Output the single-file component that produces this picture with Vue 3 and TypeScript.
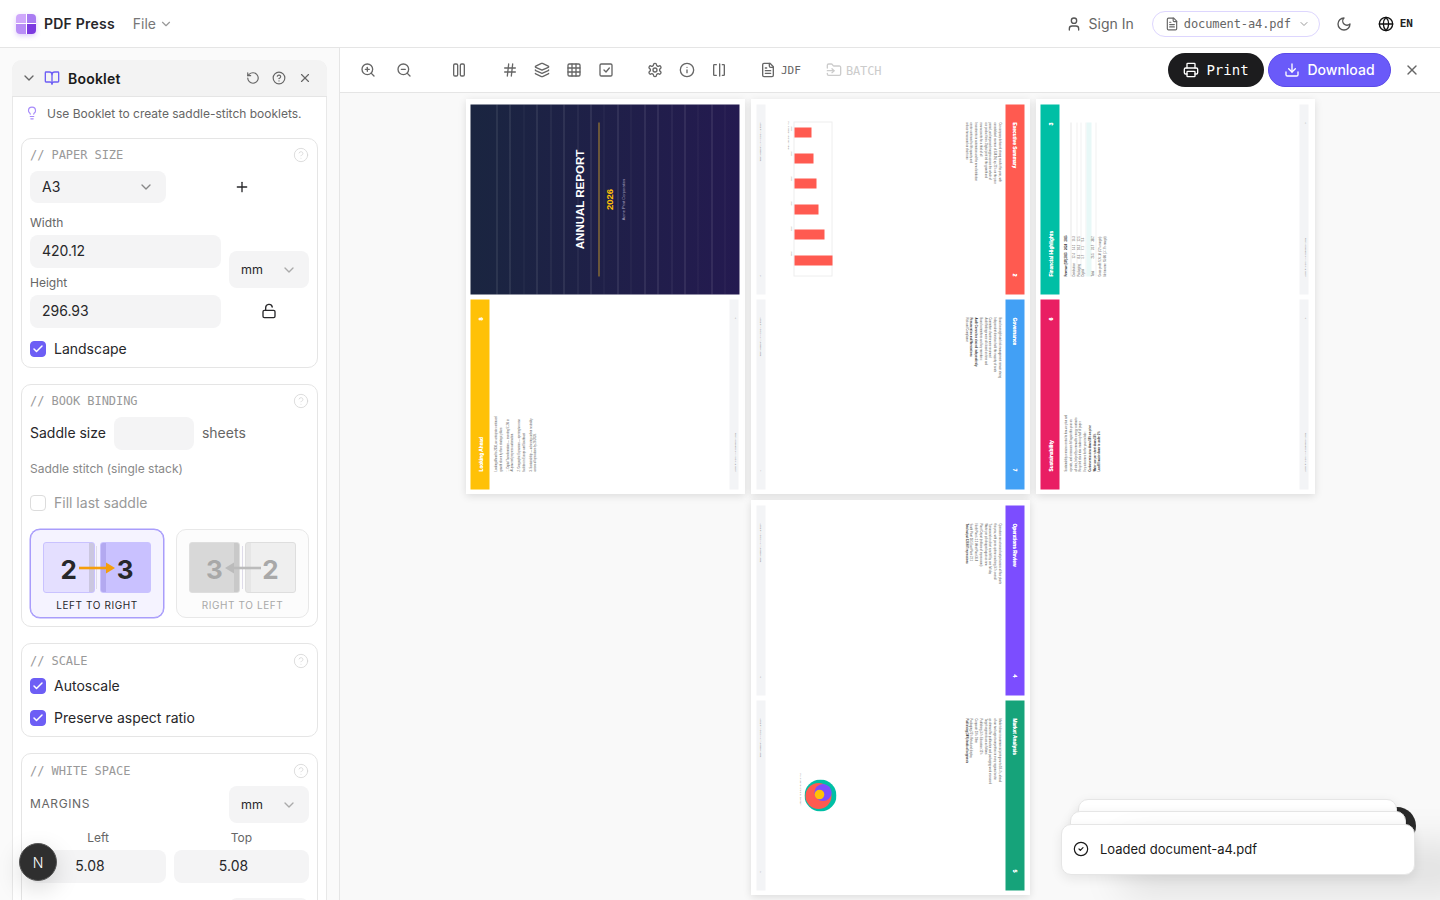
<script setup lang="ts">
import { h } from 'vue'

const ICONS: Record<string, string> = {
	chevron: '<path d="m6 9 6 6 6-6"/>',
	book: '<path d="M12 7v14"/><path d="M3 18a1 1 0 0 1-1-1V4a1 1 0 0 1 1-1h5a4 4 0 0 1 4 4 4 4 0 0 1 4-4h5a1 1 0 0 1 1 1v13a1 1 0 0 1-1 1h-6a3 3 0 0 0-3 3 3 3 0 0 0-3-3z"/>',
	undo: '<path d="M3 12a9 9 0 1 0 9-9 9.75 9.75 0 0 0-6.74 2.74L3 8"/><path d="M3 3v5h5"/>',
	help: '<circle cx="12" cy="12" r="10"/><path d="M9.09 9a3 3 0 0 1 5.83 1c0 2-3 3-3 3"/><path d="M12 17h.01"/>',
	close: '<path d="M18 6 6 18"/><path d="m6 6 12 12"/>',
	bulb: '<path d="M15 14c.2-1 .7-1.7 1.5-2.5 1-.9 1.5-2.2 1.5-3.5A6 6 0 0 0 6 8c0 1 .2 2.2 1.5 3.5.7.7 1.3 1.5 1.5 2.5"/><path d="M9 18h6"/><path d="M10 22h4"/>',
	plus: '<path d="M5 12h14"/><path d="M12 5v14"/>',
	unlock: '<rect x="3" y="11" width="18" height="11" rx="2"/><path d="M7 11V7a5 5 0 0 1 9.9-1"/>',
	user: '<path d="M19 21v-2a4 4 0 0 0-4-4H9a4 4 0 0 0-4 4v2"/><circle cx="12" cy="7" r="4"/>',
	file: '<path d="M15 2H6a2 2 0 0 0-2 2v16a2 2 0 0 0 2 2h12a2 2 0 0 0 2-2V7Z"/><path d="M14 2v4a2 2 0 0 0 2 2h4"/><path d="M10 9H8"/><path d="M16 13H8"/><path d="M16 17H8"/>',
	moon: '<path d="M12 3a6 6 0 0 0 9 9 9 9 0 1 1-9-9Z"/>',
	globe: '<circle cx="12" cy="12" r="10"/><path d="M12 2a14.5 14.5 0 0 0 0 20 14.5 14.5 0 0 0 0-20"/><path d="M2 12h20"/>',
	printer: '<path d="M6 18H4a2 2 0 0 1-2-2v-5a2 2 0 0 1 2-2h16a2 2 0 0 1 2 2v5a2 2 0 0 1-2 2h-2"/><path d="M6 9V3a1 1 0 0 1 1-1h10a1 1 0 0 1 1 1v6"/><rect x="6" y="14" width="12" height="8" rx="1"/>',
	download: '<path d="M12 15V3"/><path d="M21 15v4a2 2 0 0 1-2 2H5a2 2 0 0 1-2-2v-4"/><path d="m7 10 5 5 5-5"/>',
	zoomIn: '<circle cx="11" cy="11" r="8"/><path d="m21 21-4.35-4.35"/><path d="M11 8v6"/><path d="M8 11h6"/>',
	zoomOut: '<circle cx="11" cy="11" r="8"/><path d="m21 21-4.35-4.35"/><path d="M8 11h6"/>',
	columns: '<rect x="4" y="3" width="6" height="18" rx="2"/><rect x="14" y="3" width="6" height="18" rx="2"/>',
	hash: '<path d="M4 9h16"/><path d="M4 15h16"/><path d="M10 3 8 21"/><path d="M16 3l-2 18"/>',
	layers: '<path d="M12.83 2.18a2 2 0 0 0-1.66 0L2.6 6.08a1 1 0 0 0 0 1.83l8.58 3.91a2 2 0 0 0 1.66 0l8.58-3.9a1 1 0 0 0 0-1.83z"/><path d="M2 12a1 1 0 0 0 .58.91l8.6 3.91a2 2 0 0 0 1.65 0l8.58-3.9A1 1 0 0 0 22 12"/><path d="M2 17a1 1 0 0 0 .58.91l8.6 3.91a2 2 0 0 0 1.65 0l8.58-3.9A1 1 0 0 0 22 17"/>',
	grid: '<rect x="3" y="3" width="18" height="18" rx="2"/><path d="M3 9h18"/><path d="M3 15h18"/><path d="M9 3v18"/><path d="M15 3v18"/>',
	check: '<rect x="3" y="3" width="18" height="18" rx="2"/><path d="m9 12 3 3 5-6"/>',
	settings: '<path d="M12.22 2h-.44a2 2 0 0 0-2 2v.18a2 2 0 0 1-1 1.73l-.43.25a2 2 0 0 1-2 0l-.15-.08a2 2 0 0 0-2.73.73l-.22.38a2 2 0 0 0 .73 2.73l.15.1a2 2 0 0 1 1 1.72v.51a2 2 0 0 1-1 1.74l-.15.09a2 2 0 0 0-.73 2.73l.22.38a2 2 0 0 0 2.73.73l.15-.08a2 2 0 0 1 2 0l.43.25a2 2 0 0 1 1 1.73V20a2 2 0 0 0 2 2h.44a2 2 0 0 0 2-2v-.18a2 2 0 0 1 1-1.73l.43-.25a2 2 0 0 1 2 0l.15.08a2 2 0 0 0 2.73-.73l.22-.39a2 2 0 0 0-.73-2.73l-.15-.08a2 2 0 0 1-1-1.74v-.5a2 2 0 0 1 1-1.74l.15-.09a2 2 0 0 0 .73-2.73l-.22-.38a2 2 0 0 0-2.73-.73l-.15.08a2 2 0 0 1-2 0l-.43-.25a2 2 0 0 1-1-1.73V4a2 2 0 0 0-2-2z"/><circle cx="12" cy="12" r="3"/>',
	info: '<circle cx="12" cy="12" r="10"/><path d="M12 16v-4"/><path d="M12 8h.01"/>',
	brackets: '<path d="M8 4H5a1 1 0 0 0-1 1v14a1 1 0 0 0 1 1h3"/><path d="M17 4h2a1 1 0 0 1 1 1v14a1 1 0 0 1-1 1h-2"/><path d="M13 3v18"/>',
	folder: '<path d="M2 9V5a2 2 0 0 1 2-2h3.9a2 2 0 0 1 1.69.9l.81 1.2a2 2 0 0 0 1.67.9H20a2 2 0 0 1 2 2v10a2 2 0 0 1-2 2H4a2 2 0 0 1-2-2v-1"/><path d="M2 13h10"/><path d="m9 16 3-3-3-3"/>',
	circleCheck: '<circle cx="12" cy="12" r="10"/><path d="m9 12 2 2 4-4"/>',
	tick: '<path d="M20 6 9 17l-5-5"/>',
}

const Icon = (props: { name: string; size?: number | string; sw?: number | string }) =>
	h('svg', {
		width: props.size ?? 16,
		height: props.size ?? 16,
		viewBox: '0 0 24 24',
		fill: 'none',
		stroke: 'currentColor',
		'stroke-width': props.sw ?? 2,
		'stroke-linecap': 'round',
		'stroke-linejoin': 'round',
		innerHTML: ICONS[props.name],
	})
Icon.props = ['name', 'size', 'sw']

interface TextLine {
	t: string
	b?: boolean
	gap?: boolean
}

interface Page {
	kind: 'cover' | 'text' | 'bars' | 'table' | 'donut'
	title?: string
	num?: number
	color?: string
	flip: boolean
	lines?: TextLine[]
}

const exec: TextLine[] = [
	{ t: 'Our company delivered strong results this year, with' },
	{ t: 'consolidated revenue of $38.2M, up 21% on the prior' },
	{ t: 'period, and improved margins across the whole of' },
	{ t: 'our product lines. Digital print led the growth and' },
	{ t: 'now accounts for a third of all' },
	{ t: 'Investments in automation and the new distribution' },
	{ t: 'centre continued to lift capacity and' },
	{ t: 'reduce turnaround on short runs' },
]
const market: TextLine[] = [
	{ t: 'Market share in commercial print grew to 18.4%, ahead' },
	{ t: 'of our two largest competitors in every regional sector' },
	{ t: 'as demand for publication and packaging work recovered' },
	{ t: 'Target segments are as follows:' },
	{ t: 'Publishing    34%  Education  12%' },
	{ t: 'Corporate     29%  Other' },
	{ t: 'Packaging  25%  Retail and display' },
	{ t: 'Publishing (34%) leads all segments', b: true },
]
const ops: TextLine[] = [
	{ t: 'Operations ran at record output across all four plants' },
	{ t: 'this year, with press uptime reaching 94% overall' },
	{ t: 'Turnaround on short runs fell by one full day' },
	{ t: 'Waste per job dropped again as new' },
	{ t: 'Plant Output (millions of impressions):' },
	{ t: 'North Plant 41.2   West Plant 36.8' },
	{ t: 'South Plant 28.5   East Plant 22.1' },
	{ t: 'Total output 128.6M impressions', b: true },
]
const gov: TextLine[] = [
	{ t: 'Board oversight and risk management remain strong' },
	{ t: 'Independent directors hold the majority of seats' },
	{ t: 'Committee charters were reviewed' },
	{ t: 'Audit findings were all closed on time and' },
	{ t: 'Board committees and key members:' },
	{ t: 'Audit Committee chaired independently', b: true },
	{ t: 'Remuneration and Nominations', b: true },
	{ t: 'Risk and Compliance' },
]
const ahead: TextLine[] = [
	{ t: 'Looking Ahead to 2030, we anticipate continued' },
	{ t: 'growth driven by three strategic pillars:' },
	{ t: '1. Digital Transformation — investing $12M in', gap: true },
	{ t: 'AI-powered prepress automation.' },
	{ t: '2. Geographic Expansion — opening two new', gap: true },
	{ t: 'facilities in Europe and Southeast' },
	{ t: '3. Sustainability — achieving carbon neutrality', gap: true },
	{ t: 'across all operations by 28 2028.' },
]
const sustain: TextLine[] = [
	{ t: 'Sustainability remains central to how we plan and' },
	{ t: 'operate, and emissions fell again this year on' },
	{ t: 'all sites, helped by renewable energy contracts' },
	{ t: 'Recycled stock now makes up half of paper' },
	{ t: 'Key outcomes for the year include:' },
	{ t: 'Carbon emissions down 18% on prior', b: true },
	{ t: 'Water use per sheet down 11%', b: true },
	{ t: 'Landfill waste down to under 2%', b: true },
]

const sheets: Page[][] = [
	[
		{ kind: 'cover', flip: true },
		{ kind: 'text', title: 'Looking Ahead', num: 8, color: '#ffc107', flip: true, lines: ahead },
	],
	[
		{ kind: 'bars', title: 'Executive Summary', num: 2, color: '#ff5a50', flip: false, lines: exec },
		{ kind: 'text', title: 'Governance', num: 7, color: '#42a0f5', flip: false, lines: gov },
	],
	[
		{ kind: 'table', title: 'Financial Highlights', num: 3, color: '#00bfa5', flip: true },
		{ kind: 'text', title: 'Sustainability', num: 6, color: '#e91e63', flip: true, lines: sustain },
	],
	[
		{ kind: 'text', title: 'Operations Review', num: 4, color: '#7c4dff', flip: false, lines: ops },
		{ kind: 'donut', title: 'Market Analysis', num: 5, color: '#16a37a', flip: false, lines: market },
	],
]

const coverRules = [0, 1, 1, 0.35, 1, 0.6, 1, 0.6, 1, 0.35, 1, 0.35, 1, 1, 0.6, 1, 0.35, 1, 0.35, 0]
const bars = [
	{ y: '2021', h: 17 },
	{ y: '2022', h: 19 },
	{ y: '2023', h: 22 },
	{ y: '2024', h: 24 },
	{ y: '2025', h: 30 },
	{ y: '2026', h: 38 },
]
const tableRows = [
	{ c: ['Distribution', '12.4', '14.1', '16.3'] },
	{ c: ['Packaging', '8.4', '10.5', '12.5'] },
	{ c: ['Digital', '5.7', '7.1', '9.4'] },
]
const directions = [
	{ label: 'LEFT TO RIGHT', a: '2', b: '3', on: true },
	{ label: 'RIGHT TO LEFT', a: '3', b: '2', on: false },
]
</script>

<template>
	<div class="app">
		<header class="topbar">
			<div class="logo"><i></i><i></i><i></i><i></i></div>
			<span class="brand">PDF Press</span>
			<span class="file-menu">File <Icon name="chevron" size="14" /></span>
			<div class="top-right">
				<Icon class="user-ic" name="user" size="16" />
				<span class="sign">Sign In</span>
				<div class="doc-pill">
					<Icon name="file" size="14" />
					<span>document-a4.pdf</span>
					<Icon class="pill-chev" name="chevron" size="12" />
				</div>
				<Icon class="moon" name="moon" size="16" />
				<Icon class="globe" name="globe" size="16" />
				<span class="lang">EN</span>
			</div>
		</header>

		<div class="work">
			<aside class="side">
				<section class="panel">
					<div class="panel-head">
						<Icon class="ph-chev" name="chevron" size="16" />
						<Icon class="ph-book" name="book" size="16" />
						<span class="ph-title">Booklet</span>
						<Icon class="ph-ic" name="undo" size="14" />
						<Icon class="ph-ic" name="help" size="14" />
						<Icon class="ph-ic" name="close" size="14" />
					</div>
					<div class="tip">
						<Icon class="tip-ic" name="bulb" size="14" />
						<span>Use Booklet to create saddle-stitch booklets.</span>
					</div>

					<div class="card">
						<div class="card-title"><span>// PAPER SIZE</span><Icon class="q" name="help" size="16" sw="1.2" /></div>
						<div class="pair">
							<div class="select">A3<Icon name="chevron" size="16" /></div>
							<div class="center"><Icon name="plus" size="16" /></div>
						</div>
						<div class="size-grid">
							<div>
								<div class="lab">Width</div>
								<div class="input">420.12</div>
								<div class="lab second">Height</div>
								<div class="input">296.93</div>
							</div>
							<div class="size-right">
								<div class="select unit">mm<Icon name="chevron" size="16" /></div>
								<div class="center lock"><Icon name="unlock" size="16" /></div>
							</div>
						</div>
						<label class="check first-check"><span class="box on"><Icon name="tick" size="12" sw="3" /></span>Landscape</label>
					</div>

					<div class="card binding">
						<div class="card-title"><span>// BOOK BINDING</span><Icon class="q" name="help" size="16" sw="1.2" /></div>
						<div class="saddle">
							<span>Saddle size</span>
							<div class="input short"></div>
							<span class="muted">sheets</span>
						</div>
						<div class="hint">Saddle stitch (single stack)</div>
						<label class="check disabled"><span class="box"></span>Fill last saddle</label>
						<div class="dirs">
							<div v-for="d in directions" :key="d.label" class="dir" :class="{ on: d.on }">
								<div class="spread">
									<div class="leaf a"><span>{{ d.a }}</span></div>
									<div class="leaf b"><span>{{ d.b }}</span></div>
									<svg class="arrow" width="36" height="12" viewBox="0 0 36 12">
										<template v-if="d.on">
											<path d="M0 6h29" stroke="currentColor" stroke-width="2.6" />
											<path d="M27 0.5l9 5.5-9 5.5z" fill="currentColor" />
										</template>
										<template v-else>
											<path d="M7 6h29" stroke="currentColor" stroke-width="2.6" />
											<path d="M9 0.5 0 6l9 5.5z" fill="currentColor" />
										</template>
									</svg>
								</div>
								<div class="dir-label">{{ d.label }}</div>
							</div>
						</div>
					</div>

					<div class="card late">
						<div class="card-title"><span>// SCALE</span><Icon class="q" name="help" size="16" sw="1.2" /></div>
						<label class="check scale-a"><span class="box on"><Icon name="tick" size="12" sw="3" /></span>Autoscale</label>
						<label class="check scale-b"><span class="box on"><Icon name="tick" size="12" sw="3" /></span>Preserve aspect ratio</label>
					</div>

					<div class="card late">
						<div class="card-title"><span>// WHITE SPACE</span><Icon class="q" name="help" size="16" sw="1.2" /></div>
						<div class="margins-row">
							<span class="margins">MARGINS</span>
							<div class="select unit">mm<Icon name="chevron" size="16" /></div>
						</div>
						<div class="margin-grid">
							<div>
								<div class="lab mid">Left</div>
								<div class="input num">5.08</div>
							</div>
							<div>
								<div class="lab mid">Top</div>
								<div class="input num">5.08</div>
							</div>
						</div>
						<div class="margins-row next">
							<span></span>
							<div class="select unit"></div>
						</div>
					</div>
				</section>
			</aside>

			<main class="main">
				<div class="tools">
					<div class="tool-group"><button class="tool"><Icon name="zoomIn" /></button><button class="tool gap4"><Icon name="zoomOut" /></button></div>
					<div class="tool-group g2"><button class="tool"><Icon name="columns" /></button></div>
					<div class="tool-group g3">
						<button class="tool"><Icon name="hash" /></button>
						<button class="tool"><Icon name="layers" /></button>
						<button class="tool"><Icon name="grid" /></button>
						<button class="tool"><Icon name="check" /></button>
					</div>
					<div class="tool-group g4">
						<button class="tool"><Icon name="settings" /></button>
						<button class="tool"><Icon name="info" /></button>
						<button class="tool"><Icon name="brackets" /></button>
					</div>
					<button class="text-tool jdf"><Icon name="file" /><span>JDF</span></button>
					<button class="text-tool batch"><Icon name="folder" /><span>BATCH</span></button>
					<button class="print"><Icon name="printer" />Print</button>
					<button class="download"><Icon name="download" /><span>Download</span></button>
					<Icon class="tools-x" name="close" />
				</div>

				<div class="canvas">
					<div v-for="(sheet, si) in sheets" :key="si" class="sheet">
						<div v-for="(p, pi) in sheet" :key="pi" class="slot">
							<article class="page" :class="[p.flip ? 'ccw' : 'cw', { cover: p.kind === 'cover' }]">
								<template v-if="p.kind === 'cover'">
									<div class="rules">
										<i v-for="(o, i) in coverRules" :key="i" :style="{ opacity: o }"></i>
									</div>
									<div class="cover-title">ANNUAL REPORT</div>
									<div class="cover-line"></div>
									<div class="cover-year">2026</div>
									<div class="cover-co">Acme Print Corporation</div>
								</template>
								<template v-else>
									<div class="strip" :style="{ background: p.color }">
										<span>{{ p.title }}</span><span class="strip-num">{{ p.num }}</span>
									</div>
									<div class="body">
										<template v-if="p.kind === 'table'">
											<div class="tbl-row tbl-head"><b>Revenue ($M)</b><b>2023</b><b>2024</b><b>2025</b></div>
											<div v-for="r in tableRows" :key="r.c[0]" class="tbl-row">
												<span v-for="c in r.c" :key="c">{{ c }}</span>
											</div>
											<div class="tbl-hi"></div>
											<div class="tbl-row tbl-total"><span>Total</span><span>26.5</span><span>31.7</span><span>38.2</span></div>
											<div class="tbl-note first">Gross profit: $16.1M (42% margin)</div>
											<div class="tbl-note">Net income: $5.6M (14.7% margin)</div>
										</template>
										<div v-else class="copy">
											<div v-for="l in p.lines" :key="l.t" :class="{ bold: l.b, para: l.gap }">{{ l.t }}</div>
										</div>
										<div v-if="p.kind === 'bars'" class="fig">
											<div class="fig-box">
												<div v-for="b in bars" :key="b.y" class="bar-col">
													<i :style="{ height: b.h + 'px' }"></i>
												</div>
											</div>
											<div class="fig-years"><span v-for="b in bars" :key="b.y">{{ b.y }}</span></div>
											<div class="fig-cap">Fig. 1: Revenue Growth ($M)</div>
										</div>
										<div v-if="p.kind === 'donut'" class="donut-fig">
											<svg width="32" height="32" viewBox="0 0 32 32">
												<circle cx="16" cy="16" r="16" fill="#00bfa5" />
												<circle cx="16.5" cy="18" r="13" fill="#ff5a50" />
												<circle cx="13" cy="13.5" r="8.6" fill="#7c4dff" />
												<circle cx="15" cy="17" r="4.8" fill="#ffc107" />
											</svg>
											<div class="fig-cap">Fig. 2: Market Share by Segment</div>
										</div>
									</div>
									<div class="foot"><span>Acme Print Corp — Annual Report 2026</span><span>{{ p.num }}</span></div>
								</template>
							</article>
						</div>
					</div>
				</div>
			</main>
		</div>

		<div class="dev-n"><span>N</span></div>
		<div class="dev-behind"></div>
		<div class="toast back2"></div>
		<div class="toast back1"></div>
		<div class="toast">
			<Icon name="circleCheck" size="16" sw="1.8" />
			<span>Loaded document-a4.pdf</span>
		</div>
	</div>
</template>

<style scoped>
.app {
	position: relative;
	width: 1440px;
	height: 900px;
	overflow: hidden;
	background: #fff;
	color: #27272a;
	font-family: Inter, "Noto Sans", sans-serif;
}

/* top bar */
.topbar {
	display: flex;
	align-items: center;
	box-sizing: border-box;
	height: 48px;
	padding: 0 27px 0 16px;
	border-bottom: 1px solid #e5e5e5;
}
.logo {
	display: grid;
	grid-template-columns: 1fr 1fr;
	gap: 1px;
	width: 20px;
	height: 20px;
	border-radius: 4px;
	overflow: hidden;
	box-shadow: 0 2px 5px rgba(124, 58, 237, 0.25);
}
.logo i:nth-child(1) { background: #cfa8fb; }
.logo i:nth-child(2) { background: #a97cf2; }
.logo i:nth-child(3) { background: #b88df6; }
.logo i:nth-child(4) { background: #7c3ae0; }
.brand {
	margin-left: 8px;
	font-size: 14px;
	font-weight: 600;
	letter-spacing: 0.22px;
}
.file-menu {
	display: flex;
	align-items: center;
	gap: 3px;
	margin-left: 18px;
	font-size: 14px;
	color: #777;
}
.file-menu svg { color: #999; }
.top-right {
	display: flex;
	align-items: center;
	margin-left: auto;
	color: #555;
}
.sign {
	margin-left: 7px;
	font-size: 14px;
	color: #666;
}
.doc-pill {
	display: flex;
	align-items: center;
	box-sizing: border-box;
	width: 168px;
	height: 26px;
	margin-left: 18px;
	padding: 0 12px;
	border: 1px solid #ddd6fe;
	border-radius: 13px;
	font-family: "DejaVu Sans Mono", monospace;
	font-size: 12px;
	color: #666;
	white-space: nowrap;
}
.doc-pill svg { flex: none; }
.doc-pill span { margin-left: 5px; letter-spacing: -0.09px; }
.pill-chev { margin-left: 7px; color: #999; }
.moon { margin-left: 16px; }
.globe { margin-left: 26px; color: #111; }
.lang {
	margin-left: 6px;
	font-family: "DejaVu Sans Mono", monospace;
	font-size: 11px;
	font-weight: 700;
	color: #222;
}

.work {
	display: flex;
	height: 852px;
}

/* side panel */
.side {
	box-sizing: border-box;
	flex: none;
	width: 340px;
	padding: 12px;
	overflow: hidden;
	border-right: 1px solid #e5e5e5;
	background: #fafafa;
}
.panel {
	width: 315px;
	box-sizing: border-box;
	border-radius: 10px 10px 0 0;
	border: 1px solid #e8e8e8;
	border-top: 0;
	background: #fff;
}
.panel-head {
	display: flex;
	align-items: center;
	height: 37px;
	margin: 0 -1px;
	padding: 0 15px 0 9px;
	box-sizing: border-box;
	border-radius: 10px 10px 0 0;
	border-bottom: 1px solid #e5e5e5;
	background: #f3f3f3;
}
.ph-chev { color: #666; }
.ph-book { margin-left: 7px; color: #6d5ef5; }
.ph-title {
	margin-left: 8px;
	margin-right: auto;
	font-size: 14px;
	font-weight: 600;
	letter-spacing: 0.2px;
	color: #1a1a1a;
}
.ph-ic { margin-left: 12px; color: #666; }
.tip {
	display: flex;
	align-items: center;
	height: 32px;
	padding: 0 12px 9px 12px;
	font-size: 12px;
	color: #666;
}
.tip-ic { margin-right: 8px; color: #a78bfa; }
.card {
	margin: 0 8px 16px;
	padding: 8px 8px 10px;
	border: 1px solid #e5e5e5;
	border-radius: 10px;
}
.card.binding { padding-bottom: 8px; }
.card.late { padding-top: 9px; }
.card-title {
	display: flex;
	align-items: center;
	justify-content: space-between;
	height: 16px;
	font-family: "DejaVu Sans Mono", monospace;
	font-size: 12px;
	color: #999;
	letter-spacing: -0.06px;
}
.q { color: #d4d4d4; }
.pair {
	display: grid;
	grid-template-columns: 136px 135px;
	gap: 8px;
	margin-top: 8px;
}
.center {
	display: flex;
	align-items: center;
	justify-content: center;
}
.select {
	display: flex;
	align-items: center;
	justify-content: space-between;
	box-sizing: border-box;
	height: 32px;
	padding: 0 12px;
	border-radius: 8px;
	background: #f4f4f5;
	font-size: 14px;
	line-height: 30px;
}
.select svg { color: #888; }
.select.unit {
	height: 37px;
	font-size: 12.5px;
	line-height: 35px;
}
.select.unit svg { color: #aaa; }
.input {
	box-sizing: border-box;
	height: 33px;
	padding: 0 12px;
	border-radius: 8px;
	background: #f4f4f5;
	font-size: 14px;
	line-height: 32px;
}
.input.short { width: 80px; }
.input.num {
	padding-right: 28px;
	text-align: center;
}
.size-grid {
	display: grid;
	grid-template-columns: 191px 80px;
	gap: 8px;
	margin-top: 12px;
}
.lab {
	height: 16px;
	margin-bottom: 4px;
	font-size: 12px;
	line-height: 16px;
	color: #666;
}
.lab.second { margin-top: 7px; }
.lab.mid { text-align: center; }
.size-right { padding-top: 36px; }
.lock { margin-top: 15px; }
.check {
	display: flex;
	align-items: flex-start;
	gap: 8px;
	height: 16px;
	font-size: 14px;
	line-height: 15px;
}
.first-check { margin-top: 13px; }
.box {
	display: flex;
	align-items: center;
	justify-content: center;
	box-sizing: border-box;
	width: 16px;
	height: 16px;
	border: 1px solid #dcdcdc;
	border-radius: 4px;
	background: #fff;
}
.box.on {
	border-color: #6d5ef5;
	background: #6d5ef5;
	color: #fff;
}
.check.disabled { color: #999; }
.saddle {
	display: flex;
	align-items: center;
	gap: 8px;
	margin-top: 8px;
	font-size: 14px;
}
.saddle > span { padding-bottom: 2px; }
.muted { color: #666; }
.hint {
	height: 16px;
	margin-top: 11px;
	font-size: 12px;
	line-height: 16px;
	color: #888;
}
.saddle + .hint + .check { margin-top: 18px; }
.dirs {
	display: grid;
	grid-template-columns: 134px 133px;
	gap: 12px;
	margin-top: 18px;
}
.dir {
	box-sizing: border-box;
	height: 89px;
	padding: 12px;
	border: 1px solid #e8e8e8;
	border-radius: 10px;
	background: #fcfcfc;
	color: #a8a8a8;
}
.dir.on {
	border: 1px solid #a99dfb;
	box-shadow: 0 0 0 0.5px #a99dfb;
	background: #f5f3ff;
	color: #27272a;
}
.spread {
	position: relative;
	display: grid;
	grid-template-columns: 1fr 1fr;
	gap: 5px;
	height: 51px;
}
.spread::before {
	content: "";
	position: absolute;
	top: 4px;
	bottom: 4px;
	left: 53px;
	width: 1px;
	background: #dedbe9;
}
.leaf {
	display: flex;
	align-items: center;
	justify-content: center;
	padding-top: 4px;
	border: 1px solid #dedede;
	border-radius: 3px;
	font-size: 26px;
	line-height: 1;
	font-weight: 700;
}
.leaf.a { background: linear-gradient(90deg, #d8d8d8 0 90%, #c9c9c9 90%); }
.leaf.b { background: linear-gradient(90deg, #e6e6e6 0 10%, #efefef 10%); }
.on .leaf { border-color: #c9c2ff; }
.on .leaf.a { background: linear-gradient(90deg, #e4dfff 0 90%, #cbc7e0 90%); }
.on .leaf.b { background: linear-gradient(90deg, #b3a9f0 0 10%, #c9c1ff 10%); }
.arrow {
	position: absolute;
	top: 20px;
	left: 36px;
	color: #bbb;
}
.on .arrow { color: #f59e0b; }
.dir-label {
	margin-top: 6px;
	font-size: 10px;
	line-height: 12px;
	letter-spacing: 0.6px;
	text-align: center;
}
.scale-a { margin-top: 9px; }
.scale-b { margin-top: 16px; }
.margins-row {
	display: flex;
	align-items: center;
	justify-content: space-between;
	margin-top: 7px;
}
.margins-row .select { width: 80px; }
.margins-row.next { margin-top: 15px; }
.margins {
	padding-bottom: 2px;
	font-size: 12px;
	letter-spacing: 0.6px;
	color: #666;
}
.margin-grid {
	display: grid;
	grid-template-columns: 136px 135px;
	gap: 8px;
	margin-top: 7px;
}

/* toolbar */
.main {
	flex: 1;
	min-width: 0;
}
.tools {
	display: flex;
	align-items: center;
	box-sizing: border-box;
	height: 45px;
	padding: 0 20px 0 12px;
	border-bottom: 1px solid #e5e5e5;
	background: #fff;
}
.tool-group { display: flex; }
.tool, .text-tool {
	display: flex;
	align-items: center;
	padding: 0;
	border: 0;
	background: none;
	color: #666;
}
.tool {
	justify-content: center;
	width: 32px;
	height: 32px;
}
.gap4 { margin-left: 4px; }
.g2 { margin-left: 23px; }
.g3 { margin-left: 19px; }
.g4 { margin-left: 17px; }
.text-tool {
	gap: 5px;
	font-family: "DejaVu Sans Mono", monospace;
	font-size: 11px;
}
.text-tool span { padding-top: 1px; }
.jdf { margin-left: 25px; }
.batch {
	gap: 4px;
	margin-left: 25px;
	margin-right: auto;
	color: #ccc;
	font-size: 12px;
	letter-spacing: -0.1px;
}
.print, .download {
	display: flex;
	align-items: center;
	justify-content: center;
	gap: 7px;
	box-sizing: border-box;
	height: 34px;
	padding: 0;
	border-radius: 17px;
	font-size: 14px;
	color: #fff;
}
.print {
	width: 96px;
	border: 0;
	background: #1c1c1e;
	font-family: "DejaVu Sans Mono", monospace;
}
.download {
	width: 123px;
	margin-left: 4px;
	border: 1px solid #5b4ae8;
	background: #6a5af9;
	font-family: Inter, sans-serif;
	font-weight: 500;
}
.download span { padding-bottom: 1px; }
.tools-x {
	margin-left: 13px;
	color: #666;
}

/* imposed sheets */
.canvas {
	display: flex;
	flex-wrap: wrap;
	justify-content: center;
	align-content: flex-start;
	gap: 6px;
	height: 807px;
	padding-top: 6px;
	box-sizing: border-box;
	overflow: hidden;
	background: #f9f9f9;
}
.sheet {
	display: flex;
	flex-direction: column;
	gap: 5px;
	box-sizing: border-box;
	width: 279px;
	height: 395px;
	padding: 5px;
	background: #fff;
	box-shadow: 0 2px 8px rgba(0, 0, 0, 0.12);
}
.slot {
	display: flex;
	align-items: center;
	justify-content: center;
	height: 190px;
}
.page {
	position: relative;
	flex: none;
	display: flex;
	flex-direction: column;
	box-sizing: border-box;
	width: 190px;
	height: 269px;
	background: #fff;
	font-family: "Liberation Sans", Arial, sans-serif;
}
.page.cw { transform: rotate(90deg); }
.page.ccw { transform: rotate(-90deg); }
.cover {
	align-items: center;
	background: linear-gradient(180deg, #1a2540, #241a50);
}
.rules {
	position: absolute;
	inset: 0;
	display: flex;
	flex-direction: column;
}
.rules i {
	flex: none;
	box-sizing: border-box;
	height: 13.45px;
	border-bottom: 1px solid rgba(255, 255, 255, 0.16);
}
.cover-title {
	position: relative;
	margin-top: 102.5px;
	font-size: 11.5px;
	line-height: 13px;
	font-weight: 700;
	color: #fff;
}
.cover-line {
	position: relative;
	flex: none;
	width: 154px;
	height: 1.5px;
	margin-top: 12px;
	background: #b58d2e;
}
.cover-year {
	position: relative;
	margin-top: 5px;
	font-size: 9.5px;
	line-height: 10px;
	font-weight: 700;
	color: #ffc107;
}
.cover-co {
	position: relative;
	margin-top: 6px;
	font-size: 4px;
	line-height: 5px;
	color: #a8a5c0;
}
.strip {
	display: flex;
	justify-content: space-between;
	flex: none;
	box-sizing: border-box;
	height: 19px;
	padding: 7px 18px 0;
	font-size: 4.8px;
	line-height: 7px;
	font-weight: 700;
	color: #fff;
	text-shadow: 0 0 0.4px #fff;
}
.strip-num { font-size: 5.5px; }
.body {
	position: relative;
	flex: 1;
	display: flex;
	flex-direction: column;
	min-height: 0;
	padding: 5px 18px 0 18px;
}
.copy {
	font-size: 2.6px;
	line-height: 4.75px;
	color: #555;
	white-space: nowrap;
}
.copy .bold {
	font-weight: 700;
	color: #333;
}
.copy .para { margin-top: 2px; }
.foot {
	display: flex;
	justify-content: space-between;
	align-items: center;
	flex: none;
	height: 9px;
	margin-bottom: 1px;
	padding: 0 18px;
	background: #f3f4f6;
	font-size: 2.2px;
	color: #777;
}
.fig {
	margin-top: auto;
	margin-bottom: 21px;
	margin-left: -1px;
}
.fig-box {
	display: flex;
	align-items: flex-end;
	box-sizing: border-box;
	width: 155px;
	height: 39px;
	padding-left: 5px;
	border: 1px solid #eee;
}
.bar-col {
	flex: none;
	width: 25.6px;
}
.bar-col i {
	display: block;
	width: 10px;
	background: #ff5a50;
}
.fig-years {
	display: flex;
	padding-left: 5px;
	font-size: 2px;
	line-height: 4px;
	color: #888;
}
.fig-years span { width: 25.6px; }
.fig-cap {
	font-size: 2.2px;
	line-height: 3px;
	color: #777;
	white-space: nowrap;
}
.donut-fig {
	display: flex;
	flex-direction: column;
	align-items: center;
	margin-top: auto;
	margin-bottom: 33px;
}
.donut-fig .fig-cap { margin-top: 3px; margin-right: 12px; }
.tbl-row {
	display: grid;
	grid-template-columns: 18px 8.5px 8.5px 8.5px;
	box-sizing: border-box;
	width: 154px;
	height: 4.5px;
	font-size: 2.7px;
	line-height: 4.5px;
	color: #555;
	border-bottom: 0.4px solid #f2f2f2;
	white-space: nowrap;
}
.tbl-head {
	height: 7px;
	margin-bottom: 1px;
	color: #222;
	border-bottom-color: #e8e8e8;
}
.tbl-hi {
	width: 154px;
	height: 5.5px;
	background: #e8f8f7;
}
.tbl-total { color: #444; }
.tbl-note {
	font-size: 2.6px;
	line-height: 4.6px;
	color: #555;
	white-space: nowrap;
}
.tbl-note.first { margin-top: 2.5px; }

/* floating bits */
.dev-n {
	position: absolute;
	left: 19px;
	top: 843px;
	display: flex;
	align-items: center;
	justify-content: center;
	box-sizing: border-box;
	width: 38px;
	height: 38px;
	border: 1px solid #555;
	border-radius: 50%;
	background: #2f2f2f;
	box-shadow: 0 8px 24px rgba(0, 0, 0, 0.15);
	color: #fff;
	font-size: 14px;
	font-weight: 300;
}
.dev-behind {
	position: absolute;
	left: 1378px;
	top: 807px;
	width: 38px;
	height: 38px;
	border-radius: 50%;
	background: #2b2b2b;
}
.toast {
	position: absolute;
	left: 1061px;
	top: 824px;
	display: flex;
	align-items: center;
	gap: 11px;
	box-sizing: border-box;
	width: 354px;
	height: 51px;
	padding: 0 11px 1px;
	border: 1px solid #e6e6e6;
	border-radius: 10px;
	background: #fff;
	box-shadow: 0 4px 12px rgba(0, 0, 0, 0.1);
	font-size: 13px;
	color: #1a1a1a;
}
.toast:last-child {
	box-shadow: 0 4px 12px rgba(0, 0, 0, 0.08), 60px 20px 40px rgba(0, 0, 0, 0.1);
}
.toast.back1 {
	left: 1070px;
	top: 811px;
	width: 336px;
}
.toast.back2 {
	left: 1078px;
	top: 799px;
	width: 319px;
}
</style>

<style>
html, body {
	margin: 0;
	overflow: hidden;
}
button {
	font: inherit;
}
</style>
